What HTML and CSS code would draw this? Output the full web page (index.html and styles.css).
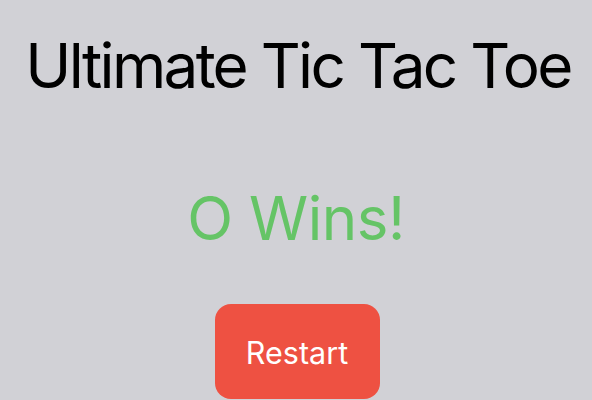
FILE: index.html
```html
<!DOCTYPE html>
<html>
<head>
<meta charset="utf-8">
<link rel="stylesheet" href="styles.css">
</head>
<body>
<main class="screen">
  <h1 class="title">Ultimate Tic Tac Toe</h1>
  <div class="status">O Wins!</div>
  <button class="restart">Restart</button>
</main>
</body>
</html>
```
FILE: styles.css
```css
html, body {
  margin: 0;
  padding: 0;
  background: #d1d1d6;
  height: 100%;
  overflow: hidden;
}
.screen {
  display: flex;
  flex-direction: column;
  align-items: center;
  font-family: Inter, "Noto Sans", sans-serif;
}
.title {
  margin: 28px 0 0 4px;
  font-size: 62px;
  font-weight: 400;
  line-height: 76px;
  color: #000;
  letter-spacing: -2.7px;
  white-space: nowrap;
}
.status {
  margin-top: 78px;
  font-size: 60px;
  line-height: 72px;
  color: #65c466;
  letter-spacing: -0.5px;
}
.restart {
  margin: 50px 0 0 2px;
  width: 165px;
  height: 95px;
  border: none;
  border-radius: 16px;
  background: #ee5142;
  color: #fff;
  font-family: Inter, "Noto Sans", sans-serif;
  font-size: 30.5px;
  padding: 2px 0 0;
}
```
